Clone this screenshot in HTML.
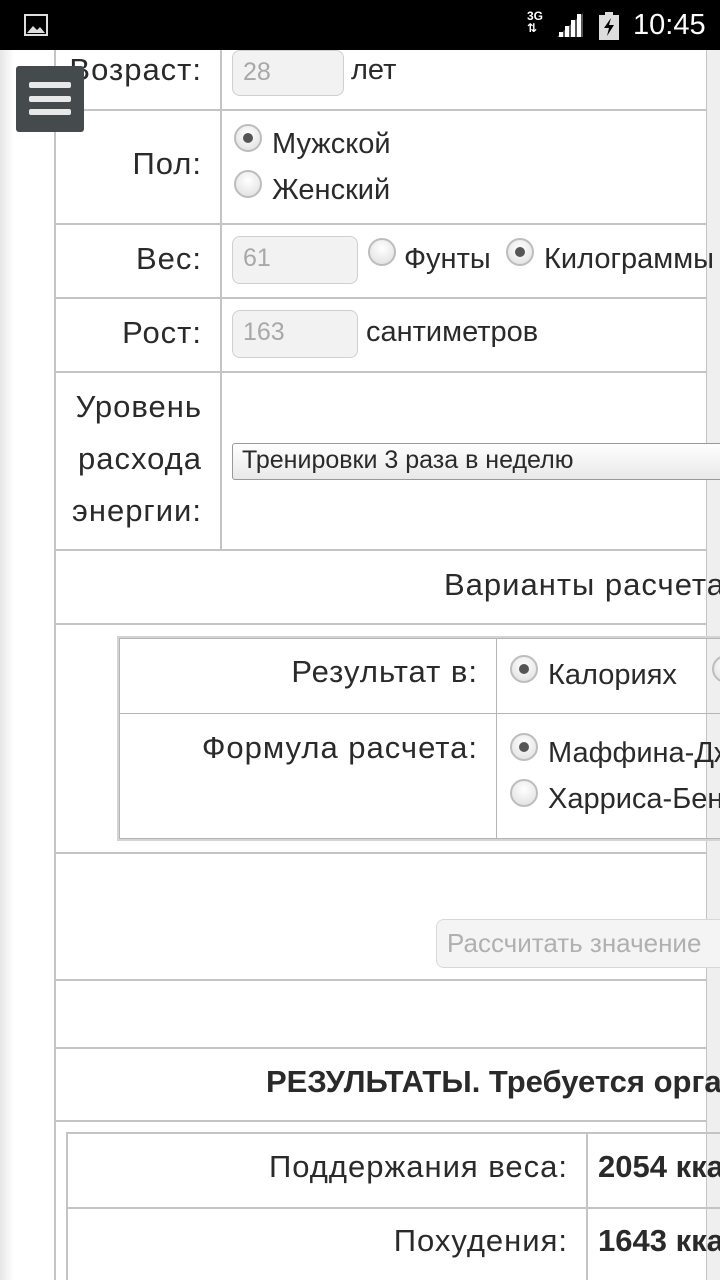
<!DOCTYPE html>
<html><head><meta charset="utf-8"><style>
*{margin:0;padding:0;box-sizing:border-box}
html,body{width:720px;height:1280px;overflow:hidden}
body{background:#fff;position:relative;font-family:"Liberation Sans","DejaVu Sans",sans-serif;color:#2a2a2a}
#w{position:absolute;left:0;top:0;width:720px;height:1280px;overflow:hidden}
.a{position:absolute;white-space:nowrap;font-size:29px;line-height:34px}
.l{font-size:31px;letter-spacing:1px}
.r{text-align:right}
.h{position:absolute;height:2px;background:#c4c4c4}
.v{position:absolute;width:2px;background:#c4c4c4}
.in{position:absolute;border:1px solid #cfcfcf;border-radius:8px;background:#f2f2f2;color:#a8a8a8;font-size:25px;padding:6px 10px;line-height:30px}
.rad{position:absolute;width:28px;height:28px;border-radius:50%;border:2px solid #bdbdbd;background:radial-gradient(circle at 50% 35%,#fff,#ddd)}
.rad.on::after{content:"";position:absolute;left:7px;top:7px;width:10px;height:10px;border-radius:50%;background:#555}
</style></head><body><div id="w">
<div style="position:absolute;left:0;top:0;width:14px;height:1280px;background:linear-gradient(90deg,#e6e6e6,#fff)"></div>
<div style="position:absolute;left:707px;top:0;width:13px;height:1280px;background:#efefef"></div>
<div class="v" style="left:54px;top:50px;height:1230px"></div>
<div class="v" style="left:706px;top:50px;height:1230px;width:1px"></div>
<div class="v" style="left:220px;top:50px;height:500px"></div>
<div class="h" style="left:54px;top:109px;width:653px"></div>
<div class="h" style="left:54px;top:223px;width:653px"></div>
<div class="h" style="left:54px;top:297px;width:653px"></div>
<div class="h" style="left:54px;top:371px;width:653px"></div>
<div class="h" style="left:54px;top:549px;width:653px"></div>
<div class="h" style="left:54px;top:623px;width:653px"></div>
<div class="h" style="left:54px;top:852px;width:653px"></div>
<div class="h" style="left:54px;top:979px;width:653px"></div>
<div class="h" style="left:54px;top:1047px;width:653px"></div>
<div class="h" style="left:54px;top:1120px;width:653px"></div>

<div class="a l r" style="right:518px;top:53px">Возраст:</div>
<div class="in" style="left:232px;top:50px;width:112px;height:46px">28</div>
<div class="a" style="left:351px;top:53px">лет</div>

<div class="a l r" style="right:518px;top:147px">Пол:</div>
<div class="rad on" style="left:234px;top:124px"></div>
<div class="a" style="left:272px;top:127px">Мужской</div>
<div class="rad" style="left:234px;top:170px"></div>
<div class="a" style="left:272px;top:173px">Женский</div>

<div class="a l r" style="right:518px;top:242px">Вес:</div>
<div class="in" style="left:232px;top:236px;width:126px;height:48px">61</div>
<div class="rad" style="left:368px;top:238px"></div>
<div class="a" style="left:404px;top:242px">Фунты</div>
<div class="rad on" style="left:506px;top:238px"></div>
<div class="a" style="left:544px;top:242px">Килограммы</div>

<div class="a l r" style="right:518px;top:316px">Рост:</div>
<div class="in" style="left:232px;top:310px;width:126px;height:48px">163</div>
<div class="a" style="left:366px;top:315px">сантиметров</div>

<div class="a l r" style="right:518px;top:381px;line-height:52px">Уровень<br>расхода<br>энергии:</div>
<div style="position:absolute;left:232px;top:443px;width:500px;height:37px;border:1px solid #999;border-radius:3px;background:linear-gradient(#fff,#e8e8e8);font-size:25px;line-height:31px;padding:1px 9px;white-space:nowrap">Тренировки 3 раза в неделю</div>

<div class="a l" style="left:444px;top:568px">Варианты расчета</div>

<div style="position:absolute;left:117px;top:636px;width:620px;height:205px;border:3px solid #d4d4d4"></div>
<div style="position:absolute;left:119px;top:638px;width:620px;height:201px;border:1px solid #b5b5b5"></div>
<div class="v" style="left:496px;top:638px;height:201px;width:1px;background:#b5b5b5"></div>
<div class="h" style="left:119px;top:713px;width:601px;height:1px;background:#b5b5b5"></div>
<div class="a l r" style="right:242px;top:655px">Результат в:</div>
<div class="rad on" style="left:510px;top:655px"></div>
<div class="a" style="left:548px;top:658px">Калориях</div>
<div class="rad" style="left:712px;top:655px"></div>
<div class="a l r" style="right:242px;top:731px">Формула расчета:</div>
<div class="rad on" style="left:510px;top:733px"></div>
<div class="a" style="left:548px;top:736px">Маффина-Джеора</div>
<div class="rad" style="left:510px;top:779px"></div>
<div class="a" style="left:548px;top:782px">Харриса-Бенедикта</div>

<div style="position:absolute;left:436px;top:919px;width:300px;height:49px;border:1px solid #d8d8d8;border-radius:8px;background:#f4f4f4;color:#b0b0b0;font-size:26px;line-height:46px;padding-left:10px;white-space:nowrap">Рассчитать значение</div>

<div class="a l" style="left:266px;top:1065px;font-weight:bold;letter-spacing:0">РЕЗУЛЬТАТЫ. Требуется организму</div>

<div style="position:absolute;left:66px;top:1132px;width:660px;height:160px;border:2px solid #c4c4c4"></div>
<div class="v" style="left:586px;top:1132px;height:148px"></div>
<div class="h" style="left:66px;top:1207px;width:654px"></div>
<div class="a l r" style="right:152px;top:1150px">Поддержания веса:</div>
<div class="a l" style="left:598px;top:1150px;font-weight:bold;letter-spacing:0">2054 ккал</div>
<div class="a l r" style="right:152px;top:1224px">Похудения:</div>
<div class="a l" style="left:598px;top:1224px;font-weight:bold;letter-spacing:0">1643 ккал</div>

<div style="position:absolute;left:16px;top:66px;width:68px;height:66px;background:#454b4d;border-radius:3px">
<div style="position:absolute;left:13px;top:16px;width:42px;height:6px;background:#e8e8e8;border-radius:2px"></div>
<div style="position:absolute;left:13px;top:30px;width:42px;height:6px;background:#e8e8e8;border-radius:2px"></div>
<div style="position:absolute;left:13px;top:43px;width:42px;height:6px;background:#e8e8e8;border-radius:2px"></div>
</div>

<div style="position:absolute;left:0;top:0;width:720px;height:50px;background:#000;color:#fff">
<svg style="position:absolute;left:24px;top:14px" width="24" height="22" viewBox="0 0 24 22"><rect x="1" y="1" width="22" height="20" fill="none" stroke="#ddd" stroke-width="2"/><path d="M3 19 L9 12 L13 16 L16 13 L21 19Z" fill="#ddd"/></svg>
<div style="position:absolute;left:527px;top:10px;font-size:12px;line-height:12px;font-weight:bold">3G<br>⇅</div>
<svg style="position:absolute;left:555px;top:12px" width="30" height="26" viewBox="0 0 30 26"><path d="M2 25 L28 1 L28 25Z" fill="#555"/><rect x="4" y="20" width="4" height="5" fill="#fff"/><rect x="10" y="14" width="4" height="11" fill="#fff"/><rect x="16" y="8" width="4" height="17" fill="#fff"/><rect x="22" y="2" width="4" height="23" fill="#fff"/></svg>
<svg style="position:absolute;left:598px;top:12px" width="22" height="28" viewBox="0 0 22 28"><rect x="7" y="0" width="8" height="3" fill="#ddd"/><rect x="1" y="3" width="20" height="25" fill="#ddd"/><path d="M13 6 L6 16 L11 16 L9 24 L16 13 L11 13Z" fill="#000"/></svg>
<div style="position:absolute;left:633px;top:8px;font-size:29px;line-height:34px">10:45</div>
</div>
</div></body></html>
